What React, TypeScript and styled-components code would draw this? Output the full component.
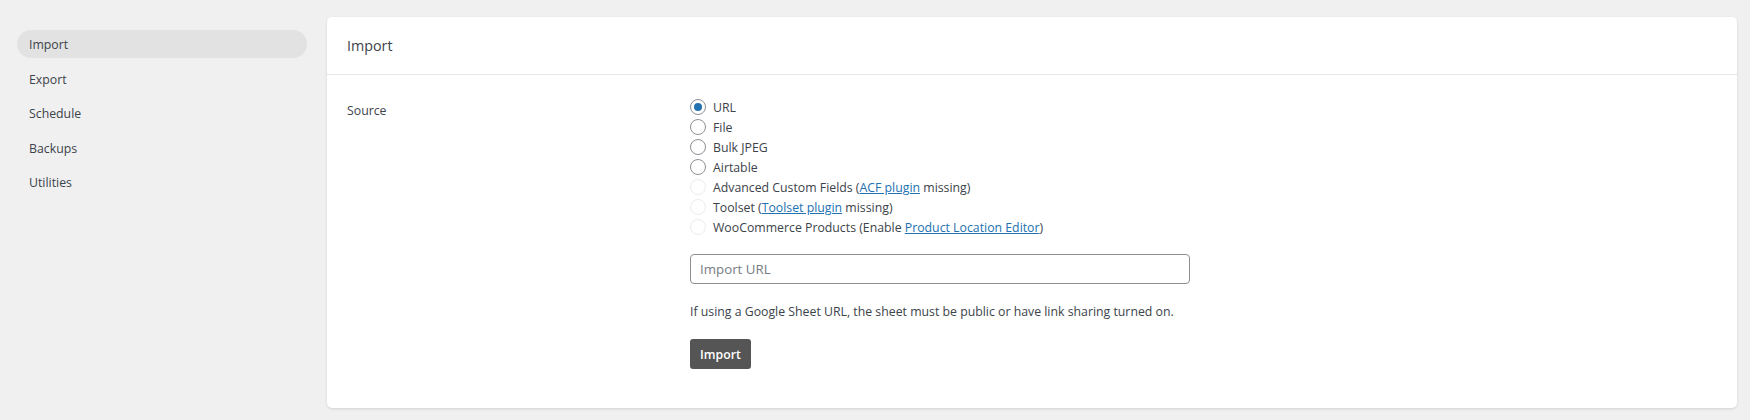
import type { ReactNode } from "react"
import styled, { createGlobalStyle } from "styled-components"

const GlobalStyle = createGlobalStyle`
  html, body {
    margin: 0;
    padding: 0;
    background: #f0f0f1;
  }
  body {
    font-family: 'Open Sans', 'Noto Sans', sans-serif;
    font-size: 12.3px;
    color: #3c434a;
  }
`

type SourceOption = {
    label: ReactNode
    checked?: boolean
    disabled?: boolean
}

const navItems = ['Import', 'Export', 'Schedule', 'Backups', 'Utilities']

export default function App() {
    const sources: SourceOption[] = [
        { label: 'URL', checked: true },
        { label: 'File' },
        { label: 'Bulk JPEG' },
        { label: 'Airtable' },
        { label: <>Advanced Custom Fields (<Link href="#">ACF plugin</Link> missing)</>, disabled: true },
        { label: <>Toolset (<Link href="#">Toolset plugin</Link> missing)</>, disabled: true },
        { label: <>WooCommerce Products (Enable <Link href="#">Product Location Editor</Link>)</>, disabled: true },
    ]

    return (
        <>
            <GlobalStyle />
            <Page>
                <Sidebar>
                    {navItems.map((item, i) => (
                        <NavItem key={item} $active={i === 0}>{item}</NavItem>
                    ))}
                </Sidebar>
                <Card>
                    <CardHeader>Import</CardHeader>
                    <CardBody>
                        <FieldLabel>Source</FieldLabel>
                        <Field>
                            <RadioList>
                                {sources.map((s, i) => (
                                    <RadioRow key={i}>
                                        <Radio $checked={s.checked} $disabled={s.disabled} />
                                        <span>{s.label}</span>
                                    </RadioRow>
                                ))}
                            </RadioList>
                            <UrlInput placeholder="Import URL" />
                            <Help>If using a Google Sheet URL, the sheet must be public or have link sharing turned on.</Help>
                            <Button>Import</Button>
                        </Field>
                    </CardBody>
                </Card>
            </Page>
        </>
    )
}

const Page = styled.div`
display: flex;
align-items: flex-start;
padding: 17px 13px 12px 17px;
gap: 20px;
`

const Sidebar = styled.nav`
width: 290px;
flex-shrink: 0;
padding-top: 13px;
display: flex;
flex-direction: column;
gap: 6.5px;
`

const NavItem = styled.div<{ $active?: boolean }>`
height: 28px;
line-height: 29px;
padding: 0 12px;
border-radius: 14px;
font-size: 12.3px;
color: #3c434a;
background: ${p => p.$active ? '#e2e2e3' : 'transparent'};
`

const Card = styled.section`
flex: 1;
background: #fff;
border-radius: 5px;
box-shadow: 0 1px 3px rgba(0, 0, 0, 0.12);
min-height: 391px;
`

const CardHeader = styled.h2`
margin: 0;
height: 58px;
box-sizing: border-box;
padding: 0 20px;
display: flex;
align-items: center;
font-size: 14.3px;
font-weight: 500;
color: #3c434a;
border-bottom: 1px solid #e6e6e7;
`

const CardBody = styled.div`
display: grid;
grid-template-columns: 343px 1fr;
padding: 22px 20px 20px;
`

const FieldLabel = styled.div`
line-height: 20px;
padding-top: 4px;
`

const Field = styled.div`
display: flex;
flex-direction: column;
align-items: flex-start;
`

const RadioList = styled.div`
display: flex;
flex-direction: column;
`

const RadioRow = styled.label`
display: flex;
align-items: center;
gap: 7px;
height: 20px;
color: #3c434a;
`

const Radio = styled.span<{ $checked?: boolean; $disabled?: boolean }>`
width: 14px;
height: 14px;
border-radius: 50%;
border: 1px solid ${p => p.$disabled ? '#ececec' : '#8c8f94'};
background: #fff;
display: flex;
align-items: center;
justify-content: center;
flex-shrink: 0;

&::after {
    content: '';
    width: 8px;
    height: 8px;
    border-radius: 50%;
    background: #2271b1;
    display: ${p => p.$checked ? 'block' : 'none'};
}
`

const Link = styled.a`
color: #2271b1;
text-decoration: underline;
`

const UrlInput = styled.input`
margin-top: 17px;
width: 500px;
height: 30px;
box-sizing: border-box;
border: 1px solid #8c8f94;
border-radius: 4px;
padding: 0 9px;
font-family: 'Open Sans', 'Noto Sans', sans-serif;
font-size: 13.3px;
color: #3c434a;

&::placeholder {
    color: #787c82;
}
`

const Help = styled.p`
margin: 19px 0 0;
line-height: 18px;
color: #3c434a;
`

const Button = styled.button`
margin-top: 18px;
height: 30px;
padding: 0 10px;
border: none;
border-radius: 3px;
background: #555555;
color: #fff;
font-family: 'Open Sans', 'Noto Sans', sans-serif;
font-size: 12.3px;
font-weight: 600;
`
